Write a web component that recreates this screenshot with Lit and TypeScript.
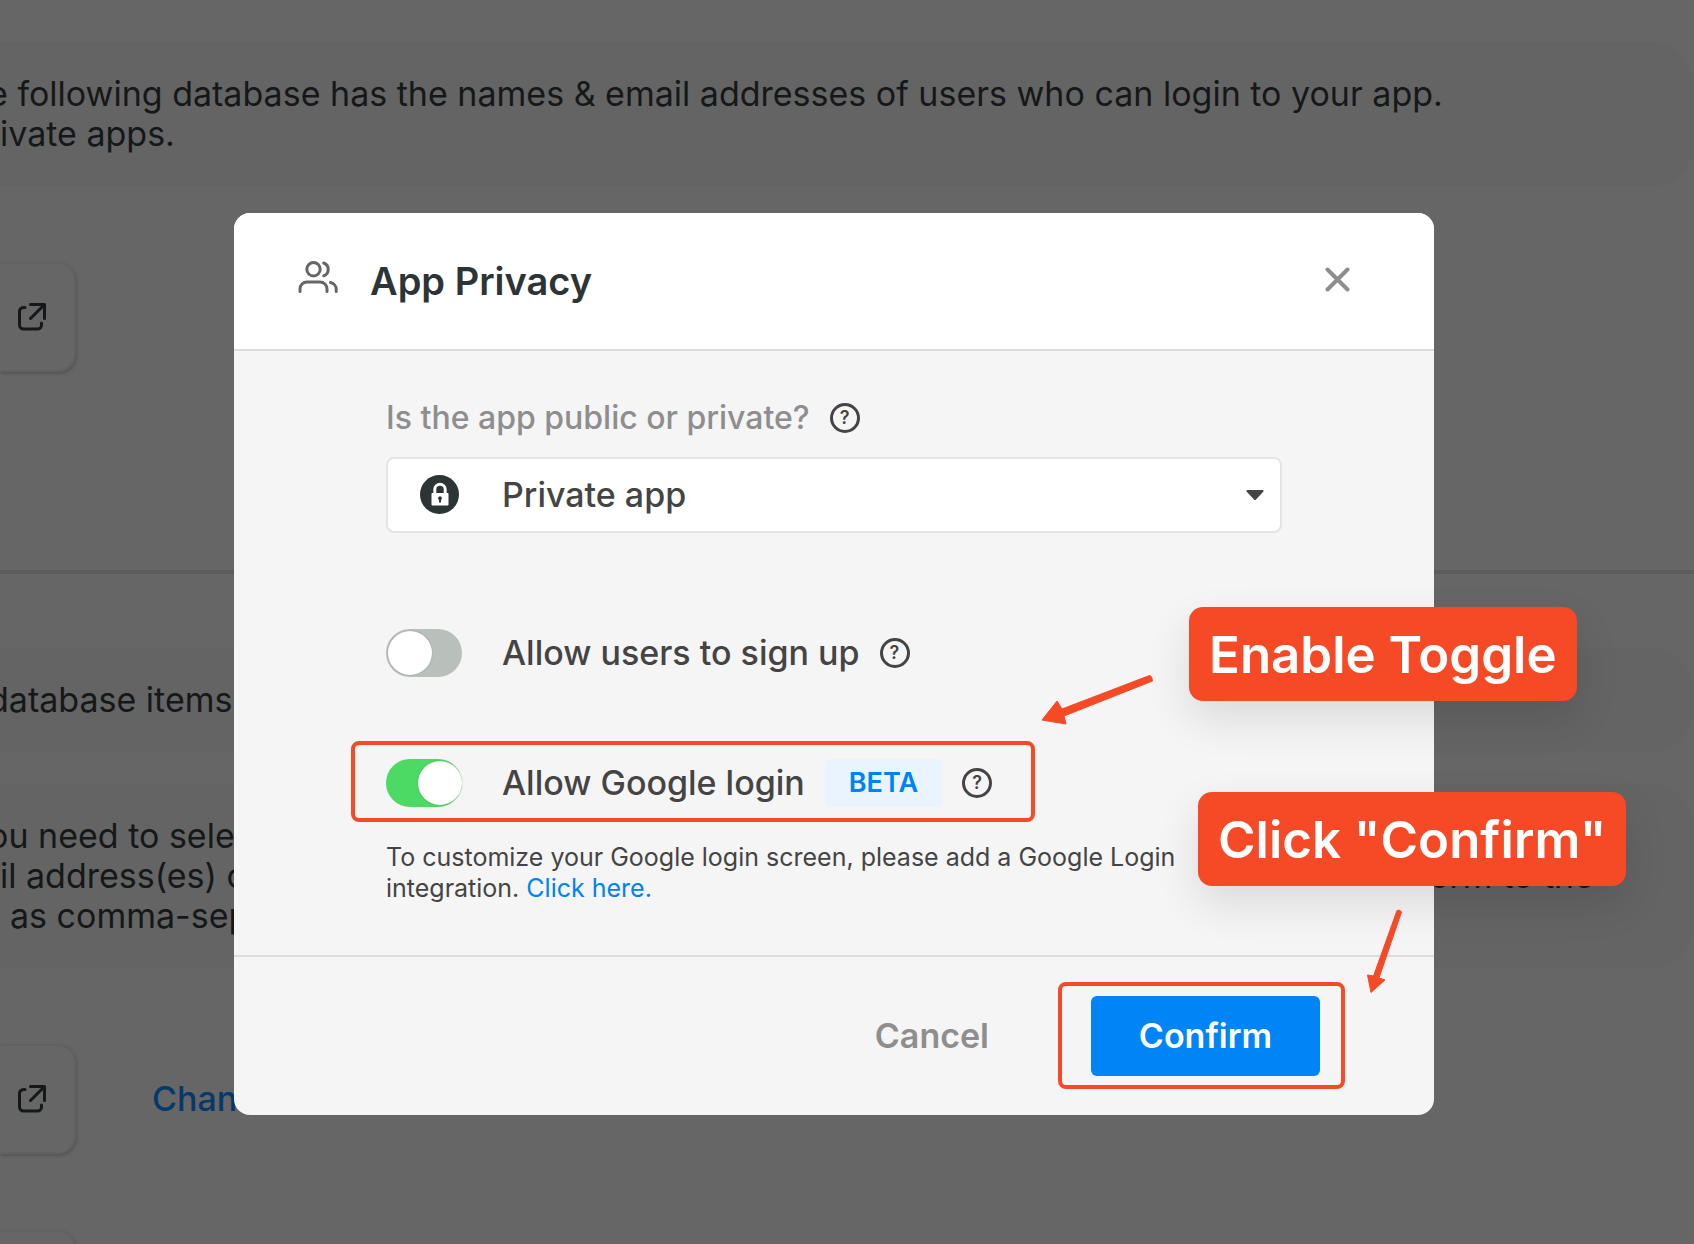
import { LitElement, html, css } from "lit";
import { customElement, property, state } from "lit/decorators.js";

const externalIcon = html`<svg width="28" height="28" viewBox="0 0 28 28" fill="none" stroke="currentColor" stroke-width="3" stroke-linecap="round" stroke-linejoin="round" aria-hidden="true">
  <path d="M7 4.5H5.500a4 4 0 0 0-4 4V22a4 4 0 0 0 4 4h14a4 4 0 0 0 4-4v-2" />
  <path d="M12.500 1.500H26.500V15.500M26 2L12.500 15.500" />
</svg>`;

const usersIcon = html`<svg width="40" height="40" viewBox="0 0 40 40" fill="none" stroke="#666" stroke-width="3" stroke-linecap="round" aria-hidden="true">
  <circle cx="15.500" cy="8.300" r="6.700" />
  <path d="M2 30.500V28a7 7 0 0 1 7-7h13a7 7 0 0 1 7 7v2.500" />
  <path d="M25.700 2a6.800 6.800 0 0 1 0 12.800" />
  <path d="M32.500 21.500a7 7 0 0 1 5.700 6.800v2.200" />
</svg>`;

const lockIcon = html`<svg class="lock" width="40" height="40" viewBox="0 0 40 40" aria-hidden="true">
  <circle cx="19.500" cy="19.500" r="19.500" fill="#2d3436" />
  <path d="M14.800 19v-4.500a5.200 5.200 0 0 1 10.400 0V19" fill="none" stroke="#fff" stroke-width="3" />
  <rect x="11.500" y="18" width="17" height="12.500" rx="1" fill="#fff" />
  <path d="M20 21.200a2 2 0 0 1 1 3.700v2.600h-2v-2.600a2 2 0 0 1 1-3.700z" fill="#2d3436" />
</svg>`;

@customElement("help-button")
export class HelpButton extends LitElement {
  @property() label = "Help";

  static styles = css`
    :host { display: flex; }
    .help {
      box-sizing: border-box;
      width: 30px;
      height: 30px;
      padding: 0;
      border: 3px solid #444;
      border-radius: 50%;
      background: none;
      color: #444;
      font: 600 18px/24px Inter, sans-serif;
      cursor: pointer;
    }
  `;

  render() {
    return html`<button class="help" type="button" aria-label=${this.label}>?</button>`;
  }
}

@customElement("page-backdrop")
export class PageBackdrop extends LitElement {
  static styles = css`
    :host { display: block; }
    .page {
      display: flex;
      flex-direction: column;
      background: #666;
      color: #151819;
      font: 400 34px/40px Inter, sans-serif;
      padding-top: 42px;
      white-space: nowrap;
    }
    .banner {
      padding: 32px 0;
      margin-right: 2px;
      border-radius: 0 40px 40px 0;
      background: #646464;
    }
    .banner p { margin: 0; }
    .banner .clipped { margin-left: -12px; }
    .banner .indented { margin-left: 10px; }
    .split {
      display: flex;
      justify-content: space-between;
      padding-right: 98px;
    }
    .row {
      display: flex;
      align-items: center;
      gap: 76px;
      margin: 76px 0;
    }
    .card {
      box-sizing: border-box;
      display: flex;
      align-items: center;
      justify-content: flex-end;
      width: 76px;
      height: 110px;
      padding: 0 28px 0 0;
      border: 2px solid #616161;
      border-left: 0;
      border-radius: 0 18px 18px 0;
      background: #666;
      color: #151819;
      box-shadow: 1px 2px 3px #555;
    }
    .row.last { margin: 0; }
    .divider {
      width: 100%;
      height: 4px;
      margin: 122px 0 74px;
      border: 0;
      background: #5c5c5c;
    }
    .stack {
      display: flex;
      flex-direction: column;
      gap: 32px;
    }
    .change {
      color: #063869;
      font-weight: 500;
      text-decoration: none;
    }
  `;

  private card() {
    return html`<button class="card" type="button" aria-label="Open">${externalIcon}</button>`;
  }

  render() {
    return html`<div class="page">
      <section class="banner">
        <p class="clipped">e following database has the names &amp; email addresses of users who can login to your app.</p>
        <p>ivate apps.</p>
      </section>
      <div class="row">${this.card()}</div>
      <hr class="divider" />
      <div class="stack">
        <section class="banner"><p class="clipped">database items</p></section>
        <section class="banner">
          <p class="clipped">ou need to sele</p>
          <p class="split"><span>il address(es) o</span><span>form to the</span></p>
          <p class="indented">as comma-sep</p>
        </section>
      </div>
      <div class="row">${this.card()}<a class="change" href="#">Chan</a></div>
      <div class="row last">${this.card()}</div>
    </div>`;
  }
}

@customElement("privacy-dialog")
export class PrivacyDialog extends LitElement {
  @state() private signUp = false;
  @state() private googleLogin = true;

  static styles = css`
    :host {
      display: block;
      width: 100%;
      max-width: 1200px;
    }
    .dialog {
      position: relative;
      border-radius: 16px;
      background: #f5f5f5;
      color: #444;
      font: 500 34px/40px Inter, sans-serif;
    }
    .head {
      display: flex;
      align-items: center;
      gap: 32px;
      padding: 44px 80px 44px 64px;
      border-bottom: 2px solid #dcdcdc;
      border-radius: 16px 16px 0 0;
      background: #fff;
    }
    .title {
      flex: 1;
      margin: 0;
      color: #2d3436;
      font-size: 38px;
      line-height: 48px;
      font-weight: 600;
    }
    .close {
      display: flex;
      padding: 4px 4px 8px;
      border: 0;
      background: none;
      cursor: pointer;
    }
    .body { padding: 48px 152px 51px; }
    .question {
      display: flex;
      align-items: center;
      gap: 20px;
      margin-bottom: 20px;
      height: 38px;
      color: #8e8e8e;
      font-size: 32px;
    }
    .field {
      display: grid;
      align-items: center;
      margin-bottom: 96px;
    }
    .field > * { grid-area: 1 / 1; }
    .lock { margin-left: 34px; pointer-events: none; z-index: 1; }
    .caret {
      justify-self: end;
      margin-right: 18px;
      pointer-events: none;
      z-index: 1;
    }
    .select {
      appearance: none;
      width: 100%;
      height: 76px;
      padding: 0 60px 0 114px;
      border: 2px solid #e4e4e4;
      border-radius: 8px;
      background: #fff;
      color: inherit;
      font: inherit;
    }
    .option {
      position: relative;
      display: flex;
      align-items: center;
      gap: 20px;
      width: fit-content;
      height: 48px;
    }
    .option + .option { margin-top: 82px; }
    .marked::after {
      content: "";
      position: absolute;
      inset: -18px -43px -15px -35px;
      border: 4px solid #f64926;
      border-radius: 8px;
      pointer-events: none;
    }
    .switch {
      display: flex;
      align-items: center;
      gap: 40px;
    }
    .toggle {
      appearance: none;
      display: flex;
      box-sizing: border-box;
      width: 76px;
      height: 48px;
      margin: 0;
      padding: 2px;
      border-radius: 24px;
      background: #b9bfbb;
      cursor: pointer;
    }
    .toggle::before {
      content: "";
      width: 44px;
      height: 44px;
      border-radius: 50%;
      background: #fff;
      box-shadow: 0 0 2px #0003;
    }
    .toggle:checked {
      justify-content: flex-end;
      padding-right: 0;
      background: #4cd964;
    }
    .beta {
      padding: 4px 24px;
      border-radius: 6px;
      background: #e9f4fe;
      color: #0082f6;
      font-size: 27px;
      font-weight: 600;
    }
    .note {
      max-width: 820px;
      margin: 35px 0 0;
      font-size: 25px;
      line-height: 31px;
      font-weight: 400;
    }
    .note a { color: #0082f6; text-decoration: none; }
    .foot {
      display: flex;
      align-items: center;
      justify-content: flex-end;
      gap: 102px;
      padding: 39px 114px;
      border-top: 2px solid #dcdcdc;
    }
    .cancel, .confirm {
      border: 0;
      font: inherit;
      font-weight: 600;
      cursor: pointer;
    }
    .cancel { padding: 0; background: none; color: #8e8e8e; }
    .confirm {
      min-width: 229px;
      height: 80px;
      border-radius: 6px;
      background: #0084f6;
      color: #fff;
    }
    .target { position: relative; display: flex; }
    .target::after {
      content: "";
      position: absolute;
      inset: -14px -25px -13px -33px;
      border: 4px solid #f64926;
      border-radius: 8px;
      pointer-events: none;
    }
    .callout {
      position: absolute;
      padding: 12px 20px 10px;
      border-radius: 14px;
      background: #f64926;
      color: #fff;
      font-size: 51px;
      line-height: 72px;
      font-weight: 600;
      white-space: nowrap;
      box-shadow: 0 18px 44px #0000001c;
    }
    .callout.toggle-tip { top: 394px; left: 955px; }
    .callout.confirm-tip { top: 579px; left: 964px; }
    .arrow { position: absolute; pointer-events: none; }
    .arrow.to-toggle { top: 459px; left: 805px; }
    .arrow.to-confirm { top: 692px; left: 1130px; }
  `;

  render() {
    return html`<div class="dialog" role="dialog" aria-labelledby="title">
      <header class="head">
        ${usersIcon}
        <h1 class="title" id="title">App Privacy</h1>
        <button class="close" type="button" aria-label="Close">
          <svg width="25" height="25" viewBox="0 0 25 25" stroke="#8e8e8e" stroke-width="4" stroke-linecap="round">
            <path d="M2.500 2.500l20 20M22.500 2.500l-20 20" />
          </svg>
        </button>
      </header>
      <div class="body">
        <div class="question">
          <label for="privacy">Is the app public or private?</label>
          <help-button label="About app privacy"></help-button>
        </div>
        <div class="field">
          <select class="select" id="privacy"><option>Private app</option></select>
          ${lockIcon}
          <svg class="caret" width="18" height="10" viewBox="0 0 18 10" aria-hidden="true">
            <path d="M1 0h16q1 1 0 2L10 9.500q-1 1-2 0L1 2q-1-1 0-2z" fill="#444" />
          </svg>
        </div>
        <div class="option">
          <label class="switch">
            <input class="toggle" type="checkbox" .checked=${this.signUp} @change=${() => (this.signUp = !this.signUp)} />
            <span>Allow users to sign up</span>
          </label>
          <help-button label="About sign up"></help-button>
        </div>
        <div class="option marked">
          <label class="switch">
            <input class="toggle" type="checkbox" .checked=${this.googleLogin} @change=${() => (this.googleLogin = !this.googleLogin)} />
            <span>Allow Google login</span>
          </label>
          <span class="beta">BETA</span>
          <help-button label="About Google login"></help-button>
        </div>
        <p class="note">To customize your Google login screen, please add a Google Login integration. <a href="#">Click here.</a></p>
      </div>
      <footer class="foot">
        <button class="cancel" type="button">Cancel</button>
        <span class="target"><button class="confirm" type="button">Confirm</button></span>
      </footer>
      <div class="callout toggle-tip">Enable Toggle</div>
      <div class="callout confirm-tip">Click "Confirm"</div>
      <svg class="arrow to-toggle" width="120" height="60" viewBox="0 0 120 60" fill="#f64926" stroke="#f64926" stroke-linejoin="round" aria-hidden="true">
        <path d="M110.500 3.500q2.500 0 3 5.500L25 44l2 8-24-4L18 29l5 8z" />
      </svg>
      <svg class="arrow to-confirm" width="44" height="92" viewBox="0 0 44 92" fill="#f64926" stroke="#f64926" stroke-linejoin="round" aria-hidden="true">
        <path d="M33 5.500q3-1.500 4.500 1.500L15 73l6 2L7 87.500 3.500 70l6 1z" />
      </svg>
    </div>`;
  }
}

@customElement("app-root")
export class AppRoot extends LitElement {
  static styles = css`
    :host {
      position: relative;
      display: block;
      height: 100vh;
      overflow: hidden;
      background: #666;
    }
    .overlay {
      position: absolute;
      inset: 0;
      display: flex;
      align-items: flex-start;
      justify-content: center;
      padding: 213px 26px 0 0;
    }
  `;

  render() {
    return html`
      <page-backdrop></page-backdrop>
      <div class="overlay"><privacy-dialog></privacy-dialog></div>
    `;
  }
}
